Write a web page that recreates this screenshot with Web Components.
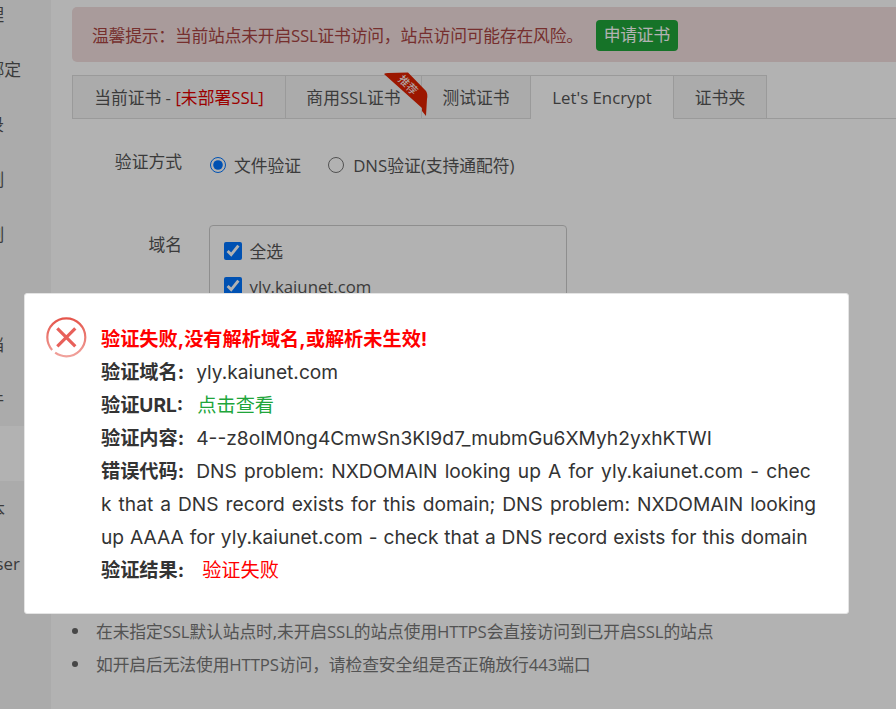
<!DOCTYPE html>
<html><head><meta charset="utf-8">
<style>
html,body{margin:0;padding:0;height:709px;overflow:hidden;background:#fff}
body{font-family:"Open Sans","Noto Sans CJK SC",sans-serif;font-size:16.8px;color:#555}
</style></head>
<body>
<ssl-page>
  <side-bar slot="side">
    <side-item>域名管理</side-item><side-item>子目录绑定</side-item><side-item>网站目录</side-item>
    <side-item>访问限制</side-item><side-item>流量限制</side-item><side-item>伪静态</side-item>
    <side-item>默认文档</side-item><side-item>配置文件</side-item><side-item active></side-item>
    <side-item style="--o:-61px">PHP版本</side-item><side-item style="--o:-61px">Composer</side-item>
  </side-bar>
  <alert-bar slot="main">温馨提示：当前站点未开启SSL证书访问，站点访问可能存在风险。<span slot="action">申请证书</span></alert-bar>
  <tab-bar slot="main">
    <tab-item w="214">当前证书 - <span style="color:#e00000">[未部署SSL]</span></tab-item>
    <tab-item w="136" ribbon>商用SSL证书</tab-item>
    <tab-item w="109">测试证书</tab-item>
    <tab-item w="143" active>Let's Encrypt</tab-item>
    <tab-item w="93">证书夹</tab-item>
  </tab-bar>
  <ssl-form slot="main"></ssl-form>
  <note-list slot="main"></note-list>
  <error-dialog slot="dialog">
    <div slot="title">验证失败,没有解析域名,或解析未生效!</div>
    <v-row label="验证域名:">yly.kaiunet.com</v-row>
    <v-row label="验证URL:"><span style="color:#20a53a;margin-left:2px">点击查看</span></v-row>
    <v-row label="验证内容:">4--z8oIM0ng4CmwSn3KI9d7_mubmGu6XMyh2yxhKTWI</v-row>
    <v-row label="错误代码:"><span style="word-spacing:1.8px">DNS problem: NXDOMAIN looking up A for yly.kaiunet.com - chec</span><span style="word-spacing:1.6px">k that a DNS record exists for this domain; DNS problem: NXDOMAIN looking </span><span style="word-spacing:.5px">up AAAA for yly.kaiunet.com - check that a DNS record exists for this domain</span></v-row>
    <v-row label="验证结果:"><span style="color:#f00;margin-left:6px">验证失败</span></v-row>
  </error-dialog>
</ssl-page>
<script>
function def(name, html, init){
  customElements.define(name, class extends HTMLElement{
    constructor(){super();const s=this.attachShadow({mode:'open'});s.innerHTML=html;}
    connectedCallback(){ if(init) init(this,this.shadowRoot); }
  });
}
def('ssl-page',`<style>
:host{display:block;position:relative;width:896px;height:709px;overflow:hidden}
.wrap{display:flex;height:100%}
.side{flex:0 0 51px;background:#f5f5f5;overflow:hidden}
.main{flex:1;min-width:0;padding:7px 0 0 21px;box-sizing:border-box}
.mask{position:absolute;inset:0;background:rgba(0,0,0,.3);z-index:2}
::slotted([slot=dialog]){z-index:3}
</style>
<div class="wrap"><div class="side"><slot name="side"></slot></div><div class="main"><slot name="main"></slot></div></div>
<div class="mask"></div><slot name="dialog"></slot>`);
def('side-bar',`<style>:host{display:block;width:51px;overflow:hidden;margin-top:-14px}</style><slot></slot>`);
def('side-item',`<style>
:host{display:flex;align-items:center;height:55px;width:51px;overflow:hidden;white-space:nowrap;font-size:16.8px;color:#555}
:host([active]){background:#fff}
span{flex:none;margin-left:var(--o,-63px)}
</style><span><slot></slot></span>`);
def('alert-bar',`<style>
:host{display:flex;align-items:center;height:55px;box-sizing:border-box;padding-left:20px;background:#f2dede;color:#a94442;border-radius:5px 0 0 5px;font-size:16.8px;letter-spacing:-.2px;white-space:nowrap}
.b{display:block;margin:2px 0 0 13px;height:31px;width:82px;line-height:29px;text-align:center;border-radius:4px;background:#20a53a;color:#fff}
</style><slot></slot><span class="b"><slot name="action"></slot></span>`);
def('tab-bar',`<style>
:host{display:flex;height:44px;margin-top:13px;box-sizing:border-box;border-bottom:1px solid #ddd}
</style><slot></slot>`);
def('tab-item',`<style>
:host{display:flex;position:relative;align-items:center;justify-content:center;box-sizing:border-box;height:44px;background:#f5f5f5;border:1px solid #ddd;border-left:none;color:#555;font-size:16.8px;white-space:nowrap}
:host(:first-child){border-left:1px solid #ddd}
:host([active]){background:#fff;border-bottom-color:#fff}
:host([ribbon]){z-index:1}
svg{position:absolute;left:97px;top:-4px;overflow:visible}
.t{position:absolute;left:111px;top:3px;font-size:11px;line-height:12px;color:#fff;transform:rotate(45deg)}
</style><span><slot></slot></span><span id="r" hidden></span>`,(h,s)=>{
  h.style.width=h.getAttribute('w')+'px';
  if(h.hasAttribute('ribbon')){
    const r=s.getElementById('r');r.hidden=false;
    r.innerHTML=`<svg width="44" height="46" viewBox="0 0 44 46"><path d="M1 2 Q2 1 5 1 L25 0.5 L43 19 Q45 22 44 27 L43 44 L39 39 L39 36 Z" fill="#e02200"/></svg><span class="t">推荐</span>`;
  }
});
def('ssl-form',`<style>
:host{display:block;height:495px;box-sizing:border-box;padding-top:28px;font-size:16.8px;color:#555}
.row{display:flex}
.lb{width:110px;text-align:right;flex:none;line-height:30px}
.opts{display:flex;align-items:center;height:30px;margin-left:28px;padding-top:3px}
label{display:inline-flex;align-items:center}
input{margin:0;width:16px;height:16px;accent-color:#0075ff}
.opts label{margin-right:27px}.opts input{margin-right:8px}
.opts label+label input{margin-right:9px}
.box{margin-left:27px;width:358px;height:200px;box-sizing:border-box;border:1px solid #ccc;border-radius:4px;padding:7px 14px;margin-top:-5px}
.box label{display:flex;height:35.5px;gap:7.5px}
.box input{width:18px;height:18px}
.r2{margin-top:50px}
</style>
<div class="row"><div class="lb">验证方式</div><div class="opts"><label><input type="radio" name="m" checked>文件验证</label><label><input type="radio" name="m">DNS验证(支持通配符)</label></div></div>
<div class="row r2"><div class="lb">域名</div><div class="box"><label><input type="checkbox" checked>全选</label><label><input type="checkbox" checked>yly.kaiunet.com</label></div></div>`);
def('note-list',`<style>
:host{display:block;font-size:16.8px;letter-spacing:-.12px;color:#777}
ul{margin:0;padding:0;list-style:none}
li{display:flex;align-items:center;height:33px;white-space:nowrap}
li::before{content:"";flex:none;width:6px;height:6px;border-radius:50%;background:#666;margin:0 18px 0 0}
</style><ul><li>在未指定SSL默认站点时,未开启SSL的站点使用HTTPS会直接访问到已开启SSL的站点</li><li>如开启后无法使用HTTPS访问，请检查安全组是否正确放行443端口</li></ul>`);
def('error-dialog',`<style>
:host{display:block;position:absolute;left:24px;top:293px;width:825px;height:321px;box-sizing:border-box;background:#fff;border:1px solid #e4e4e4;border-radius:3px;padding:29px 30px 0 76px;font-family:Inter,"Noto Sans CJK SC",sans-serif;font-size:19.2px;line-height:33px;color:#333}
svg{position:absolute;left:19px;top:22px}
.title{color:#f00;font-weight:700}
</style>
<svg width="44" height="44" viewBox="0 0 44 44"><defs><linearGradient id="g" x1="0" y1="0" x2="0" y2="1"><stop offset="0" stop-color="#e5554b"/><stop offset="1" stop-color="#f0a29c"/></linearGradient></defs><circle cx="22.3" cy="21.3" r="19" fill="none" stroke="url(#g)" stroke-width="2.2" stroke-dasharray="41.5 4 73.9 0"/><path d="M13.3 12.3 31.3 30.3M31.3 12.3 13.3 30.3" stroke="#e8605a" stroke-width="3.2" fill="none"/></svg>
<div class="title"><slot name="title"></slot></div><slot></slot>`);
def('v-row',`<style>
:host{display:block;word-break:break-all}
b{font-weight:700;color:#333;margin-right:12px;word-spacing:0}
</style><b id="l"></b><slot></slot>`,(h,s)=>{s.getElementById('l').textContent=h.getAttribute('label');});
</script>
</body></html>
